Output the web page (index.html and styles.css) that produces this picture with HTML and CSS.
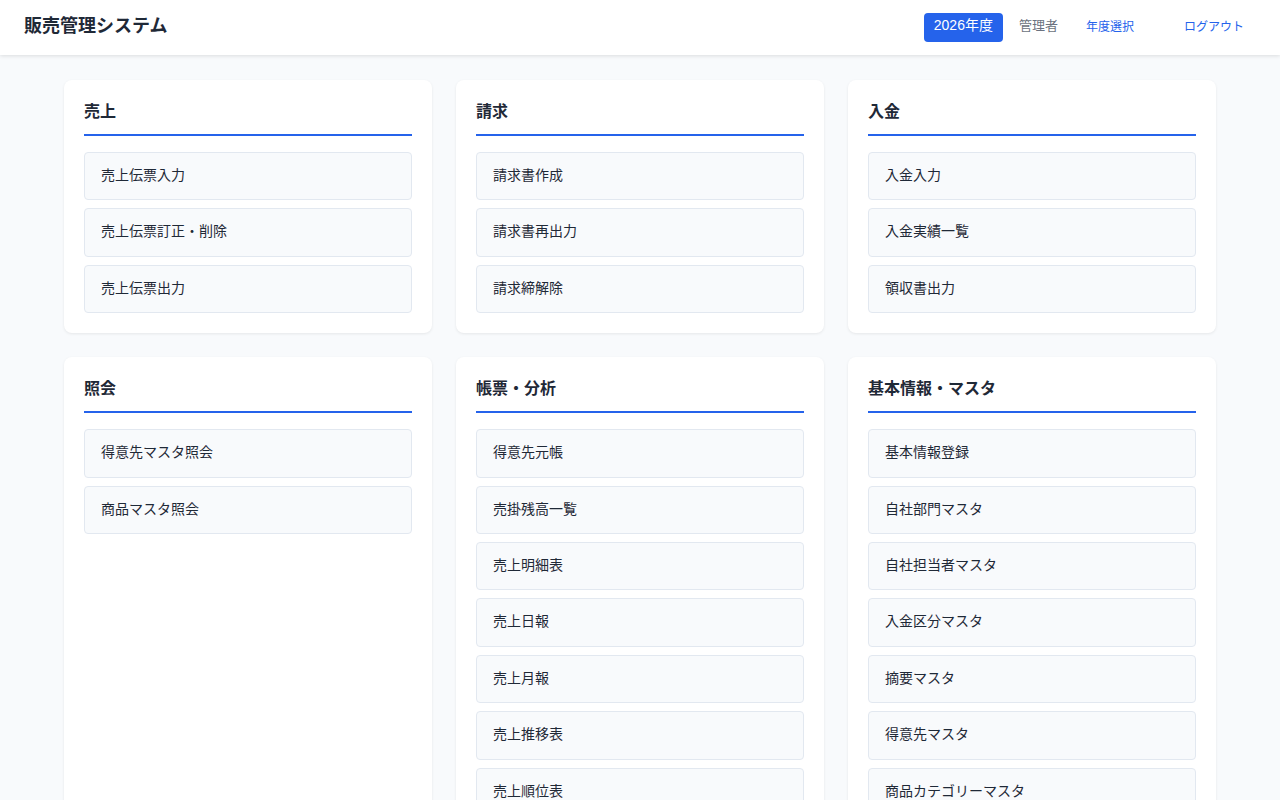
FILE: index.html
```html
<!DOCTYPE html>
<html lang="ja">
<head>
    <meta charset="UTF-8">
    <meta name="viewport" content="width=device-width, initial-scale=1.0">
    <title>販売管理システム</title>
    <link rel="stylesheet" href="styles.css">
</head>
<body>
    <header class="header">
        <h1 class="app-title">販売管理システム</h1>
        <nav class="header-nav">
            <span class="year-badge">2026年度</span>
            <span class="user-name">管理者</span>
            <a class="nav-link" href="#">年度選択</a>
            <a class="nav-link logout" href="#">ログアウト</a>
        </nav>
    </header>

    <main class="menu-grid">
        <section class="menu-card">
            <h2 class="card-title">売上</h2>
            <ul class="menu-list">
                <li><a class="menu-item" href="#">売上伝票入力</a></li>
                <li><a class="menu-item" href="#">売上伝票訂正・削除</a></li>
                <li><a class="menu-item" href="#">売上伝票出力</a></li>
            </ul>
        </section>
        <section class="menu-card">
            <h2 class="card-title">請求</h2>
            <ul class="menu-list">
                <li><a class="menu-item" href="#">請求書作成</a></li>
                <li><a class="menu-item" href="#">請求書再出力</a></li>
                <li><a class="menu-item" href="#">請求締解除</a></li>
            </ul>
        </section>
        <section class="menu-card">
            <h2 class="card-title">入金</h2>
            <ul class="menu-list">
                <li><a class="menu-item" href="#">入金入力</a></li>
                <li><a class="menu-item" href="#">入金実績一覧</a></li>
                <li><a class="menu-item" href="#">領収書出力</a></li>
            </ul>
        </section>

        <section class="menu-card">
            <h2 class="card-title">照会</h2>
            <ul class="menu-list">
                <li><a class="menu-item" href="#">得意先マスタ照会</a></li>
                <li><a class="menu-item" href="#">商品マスタ照会</a></li>
            </ul>
        </section>
        <section class="menu-card">
            <h2 class="card-title">帳票・分析</h2>
            <ul class="menu-list">
                <li><a class="menu-item" href="#">得意先元帳</a></li>
                <li><a class="menu-item" href="#">売掛残高一覧</a></li>
                <li><a class="menu-item" href="#">売上明細表</a></li>
                <li><a class="menu-item" href="#">売上日報</a></li>
                <li><a class="menu-item" href="#">売上月報</a></li>
                <li><a class="menu-item" href="#">売上推移表</a></li>
                <li><a class="menu-item" href="#">売上順位表</a></li>
                <li><a class="menu-item" href="#">粗利分析表</a></li>
            </ul>
        </section>
        <section class="menu-card">
            <h2 class="card-title">基本情報・マスタ</h2>
            <ul class="menu-list">
                <li><a class="menu-item" href="#">基本情報登録</a></li>
                <li><a class="menu-item" href="#">自社部門マスタ</a></li>
                <li><a class="menu-item" href="#">自社担当者マスタ</a></li>
                <li><a class="menu-item" href="#">入金区分マスタ</a></li>
                <li><a class="menu-item" href="#">摘要マスタ</a></li>
                <li><a class="menu-item" href="#">得意先マスタ</a></li>
                <li><a class="menu-item" href="#">商品カテゴリーマスタ</a></li>
                <li><a class="menu-item" href="#">商品マスタ</a></li>
            </ul>
        </section>
    </main>
</body>
</html>
```

FILE: styles.css
```css
:root {
    --primary: #2563eb;
    --text: #1f2937;
    --text-muted: #6b7280;
    --bg: #f8fafc;
    --item-bg: #f8fafc;
    --item-border: #e2e8f0;
    --font: "Liberation Sans", "Noto Sans CJK JP", sans-serif;
}
* {
    box-sizing: border-box;
}
body {
    margin: 0;
    font-family: var(--font);
    background: var(--bg);
    color: var(--text);
}
.header {
    height: 55px;
    background: #fff;
    display: flex;
    align-items: center;
    justify-content: space-between;
    padding: 0 20px 0 24px;
    box-shadow: 0 1px 4px rgba(0,0,0,0.12);
}
.app-title {
    margin: 0 0 8px;
    font-size: 18px;
    font-weight: 700;
    color: var(--text);
}
.header-nav {
    display: flex;
    align-items: center;
    font-size: 13px;
    padding-bottom: 3px;
}
.year-badge {
    background: var(--primary);
    color: #fff;
    font-size: 14px;
    padding: 4px 10px 8px;
    border-radius: 4px;
    line-height: 17px;
    margin-top: 3px;
}
.user-name {
    color: var(--text-muted);
    margin-left: 16px;
    line-height: 20px;
}
.nav-link {
    color: var(--primary);
    text-decoration: none;
    font-size: 12px;
    padding: 2px 16px 3px;
}
.nav-link:first-of-type {
    margin-left: 12px;
}
.logout {
    margin-left: 18px;
}
.menu-grid {
    width: 1152px;
    margin: 25px auto;
    display: grid;
    grid-template-columns: repeat(3, 1fr);
    gap: 24px;
}
.menu-card {
    background: #fff;
    border-radius: 8px;
    padding: 20px;
    box-shadow: 0 1px 3px rgba(0,0,0,0.08);
}
.card-title {
    margin: 0 0 16px;
    font-size: 16px;
    font-weight: 700;
    line-height: 24px;
    padding-bottom: 10px;
    border-bottom: 2px solid var(--primary);
}
.menu-list {
    list-style: none;
    margin: 0;
    padding: 0;
    display: flex;
    flex-direction: column;
    gap: 8px;
}
.menu-item {
    display: block;
    padding: 11px 16px 13px;
    font-size: 14px;
    line-height: 1.6;
    color: var(--text);
    text-decoration: none;
    background: var(--item-bg);
    border: 1px solid var(--item-border);
    border-radius: 4px;
}
```
